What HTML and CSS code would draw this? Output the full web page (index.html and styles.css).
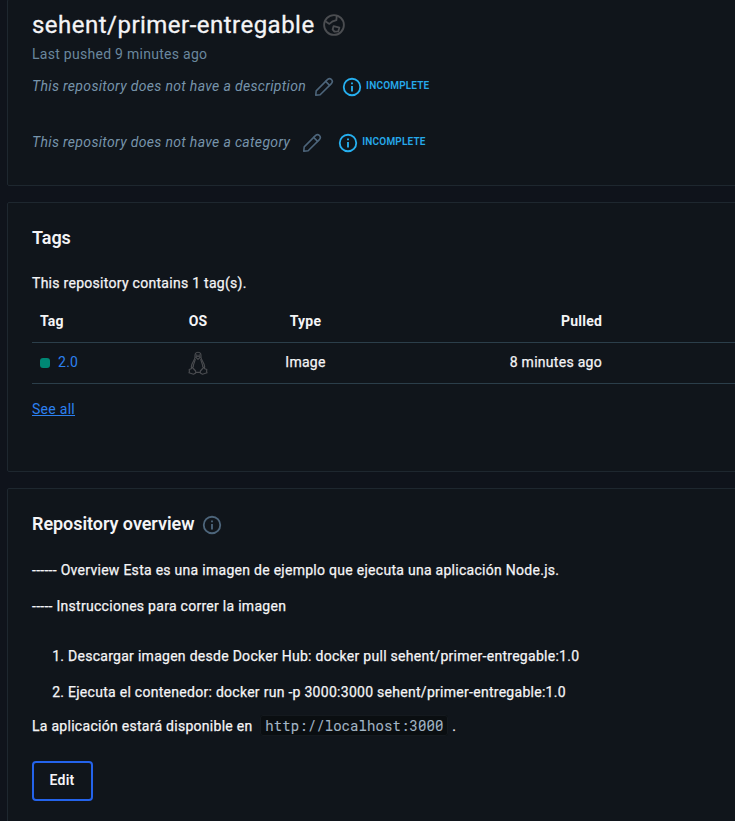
FILE: index.html
```html
<!DOCTYPE html>
<html lang="en">
<head>
<meta charset="utf-8">
<title>sehent/primer-entregable</title>
<link rel="stylesheet" href="styles.css">
</head>
<body>
<svg class="defs" aria-hidden="true">
  <symbol id="info" viewBox="0 0 24 24"><path d="M11 7h2v2h-2zm0 4h2v6h-2zm1-9a10 10 0 1 0 0 20 10 10 0 0 0 0-20m0 18a8 8 0 1 1 0-16 8 8 0 0 1 0 16" fill="currentColor"/></symbol>
  <symbol id="pencil" viewBox="0 0 24 24"><g fill="none" stroke="currentColor" stroke-width="1.7" stroke-linejoin="round" stroke-linecap="round"><path d="M3 21 3.5 16.2 16 3.7a3.05 3.05 0 0 1 4.3 4.3L7.8 20.5z"/><path d="m13.8 5.9 4.3 4.3"/></g></symbol>
</svg>
<main class="page">
  <section class="card summary">
    <div class="title-row">
      <h1>sehent/primer-entregable</h1>
      <svg class="globe" viewBox="0 0 24 24" fill="none" stroke="currentColor" stroke-width="2" stroke-linejoin="round"><circle cx="12" cy="12" r="10.8"/><path d="M2.5 7.8 7 10.8 10.6 8 14.6 6.6 15 1.8"/><path d="m11.6 13.2 6.3 1.6-1.3 4.2-4.1.3-2-2.5z"/></svg>
    </div>
    <p class="pushed">Last pushed 9 minutes ago</p>
    <div class="field">
      <em>This repository does not have a description</em>
      <svg class="pencil"><use href="#pencil"/></svg>
      <svg class="info"><use href="#info"/></svg>
      <span class="status">INCOMPLETE</span>
    </div>
    <div class="field category">
      <em>This repository does not have a category</em>
      <svg class="pencil"><use href="#pencil"/></svg>
      <svg class="info"><use href="#info"/></svg>
      <span class="status">INCOMPLETE</span>
    </div>
  </section>
  <section class="card tags">
    <h2>Tags</h2>
    <p class="count">This repository contains 1 tag(s).</p>
    <div class="row head"><span>Tag</span><span class="center">OS</span><span class="center">Type</span><span class="right">Pulled</span></div>
    <div class="row body">
      <span class="tag"><i class="dot"></i><a>2.0</a></span>
      <span class="center"><svg class="tux" viewBox="0 0 20 24" fill="none" stroke="currentColor" stroke-width="1.15" stroke-linejoin="round"><path d="M7 6.6C6.8 3 7.4 1.2 10 1.2s3.2 1.8 3 5.4c.1 2.6 3.7 5.3 3.7 9.2l-.4 1.5M7 6.6c-.1 2.6-3.7 5.3-3.7 9.2l.4 1.5"/><path d="M7.4 8.2c-.5 2.3-2.3 5-2.2 8M12.6 8.2c.5 2.3 2.3 5 2.2 8M7.6 6.2 10 5l2.4 1.2L10 8.4z"/><path d="m4 16-.8 1.7-2 .8.2 2-.4 1.3 4.5 1.4 2.2-1.2-.1-2zM16 16l.8 1.7 2 .8-.2 2 .4 1.3-4.5 1.4-2.2-1.2.1-2zM7.6 21.4h4.8"/><path d="M8.6 3.5v1.2M11.4 3.5v1.2" stroke-width="1.6"/></svg></span>
      <span class="center">Image</span>
      <span class="right">8 minutes ago</span>
    </div>
    <a class="see-all">See all</a>
  </section>
  <section class="card overview">
    <div class="heading"><h2>Repository overview</h2><svg class="info"><use href="#info"/></svg></div>
    <p>------ Overview Esta es una imagen de ejemplo que ejecuta una aplicación Node.js.</p>
    <p>----- Instrucciones para correr la imagen</p>
    <ol>
      <li>Descargar imagen desde Docker Hub: docker pull sehent/primer-entregable:1.0</li>
      <li>Ejecuta el contenedor: docker run -p 3000:3000 sehent/primer-entregable:1.0</li>
    </ol>
    <p>La aplicación estará disponible en <code>http://localhost:3000</code> .</p>
    <button>Edit</button>
  </section>
</main>
</body>
</html>
```
FILE: styles.css
```css
* { box-sizing: border-box; }
body {
  margin: 0;
  height: 821px;
  overflow: hidden;
  background: #0f131b;
  color: #f4f4f6;
  font: 400 14px/20px Roboto, sans-serif;
  letter-spacing: 0.28px;
}
h1, h2, p, ol { margin: 0; }
svg { display: block; flex: none; }
.defs { position: absolute; width: 0; height: 0; }
.page { width: 760px; padding-left: 7px; }
.card {
  border: 1px solid #1e272f;
  border-radius: 2px;
  background: #10151b;
  padding: 0 24px;
}
.summary { height: 187px; margin-top: -1px; }
.title-row { display: flex; align-items: center; padding-top: 9px; }
h1 { width: 291px; font-size: 24px; line-height: 32px; font-weight: 400; letter-spacing: 0.48px; white-space: nowrap; -webkit-text-stroke: 0.3px; }
.globe { width: 22px; height: 22px; color: #4b4d51; }
.pushed { margin-top: 3px; color: #6a879e; }
.field { display: flex; align-items: center; height: 20px; margin-top: 13px; color: #7794ab; }
.field em { margin-top: -2px; letter-spacing: 0.335px; }
.field.category { margin-top: 36px; }
.pencil { width: 22px; height: 22px; margin-left: 7px; color: #4d657b; }
.category .pencil { margin-left: 11px; }
.info { width: 22px; height: 22px; color: #26b0f0; }
.field .info { margin-left: 6px; }
.category .info { margin-left: 14px; }
.status { margin: -2px 0 0 3px; font-size: 10px; font-weight: 600; letter-spacing: 0.18px; color: #26a9ea; }
.tags { height: 270px; margin-top: 16px; padding-top: 22px; }
h2 { font-size: 18px; line-height: 26px; font-weight: 600; letter-spacing: -0.05px; }
.count { margin-top: 22px; }
.count, .body, .overview p, li { -webkit-text-stroke: 0.25px; }
.row {
  display: grid;
  grid-template-columns: 116px 100px 115px 247px 1fr;
  align-items: center;
  height: 41px;
  padding-bottom: 2px;
  margin-right: -25px;
  border-bottom: 1px solid #2b3e4a;
}
.row > :first-child { padding-left: 8px; }
.head { height: 50px; padding: 6px 0 0; font-weight: 700; letter-spacing: 0.2px; }
.center { display: flex; justify-content: center; }
.right { text-align: right; padding-right: 8px; }
.tag { display: flex; align-items: center; gap: 8px; }
.dot { width: 10px; height: 10px; margin-top: 2px; border-radius: 3px; background: #008774; }
a { color: #2c80f0; -webkit-text-stroke: 0; }
.tux { width: 20px; height: 24px; margin-top: 2px; color: #4a4c50; }
.see-all { display: inline-block; margin-top: 15px; text-decoration: underline; }
.overview { height: 350px; margin-top: 16px; padding-top: 22px; }
.heading { display: flex; align-items: center; gap: 7px; margin-bottom: 23px; }
.heading .info { margin-top: 2px; color: #4d657b; }
.overview p { margin-bottom: 16px; }
ol { padding-left: 36px; margin: 30px 0 14px; }
li + li { margin-top: 16px; }
code {
  margin: 0 0 0 4px;
  padding: 0 4px;
  border-radius: 3px;
  border: 1px solid #14191e;
  background: #0a0e11;
  color: #a3b5c5;
  font: 14px/16px "Roboto Mono", "DejaVu Sans Mono", monospace;
  letter-spacing: 0.08px;
  -webkit-text-stroke: 0.1px;
}
button {
  display: block;
  width: 61px;
  height: 40px;
  margin-top: 25px;
  padding: 0 1px 2px 0;
  border: 2px solid #2463eb;
  border-radius: 4px;
  background: transparent;
  color: inherit;
  font: 600 14px/20px Roboto, sans-serif;
  letter-spacing: 0.2px;
}
```
